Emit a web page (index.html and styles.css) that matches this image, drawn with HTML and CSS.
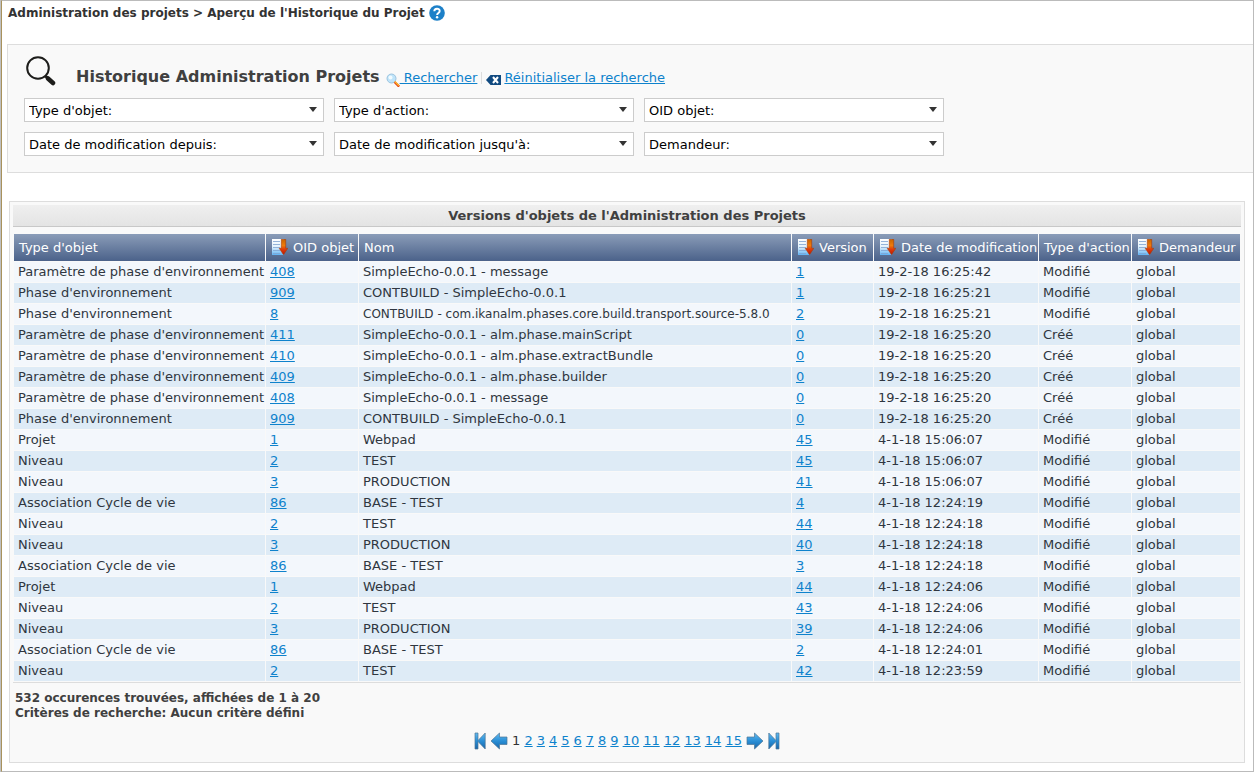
FILE: index.html
```html
<!DOCTYPE html>
<html lang="fr">
<head>
<meta charset="utf-8">
<title>Aperçu de l'Historique du Projet</title>
<link rel="stylesheet" href="styles.css">
</head>
<body>
<svg class="defs" aria-hidden="true">
  <defs>
    <linearGradient id="paper" x1="0" y1="0" x2="0" y2="1"><stop offset="0" stop-color="#fff"/><stop offset="0.5" stop-color="#e2f2fc"/><stop offset="1" stop-color="#5fb2f4"/></linearGradient>
    <linearGradient id="flame" x1="0" y1="0" x2="0" y2="1"><stop offset="0" stop-color="#c86400"/><stop offset="0.4" stop-color="#ee7c0c"/><stop offset="0.65" stop-color="#e03a08"/><stop offset="1" stop-color="#b81804"/></linearGradient>
    <linearGradient id="blue" x1="0" y1="0" x2="0" y2="1"><stop offset="0" stop-color="#62baf0"/><stop offset="0.5" stop-color="#2a8fd6"/><stop offset="1" stop-color="#1764a8"/></linearGradient>
    <symbol id="sort" viewBox="0 0 17 17">
      <path d="M1 0h12v16H1z" fill="url(#paper)"/>
      <path d="M2 2.500h7M2 5.500h7M2 8.500h7M2 11.500h7M2 14.500h7" stroke="#7fa3d0" stroke-width=".8"/>
      <path d="M10.300 .3h4.400v9h2.100L12.500 15.700 8.200 9.300h2.100z" fill="url(#flame)" stroke="#a83a08" stroke-width=".6"/>
    </symbol>
    <symbol id="arrow" viewBox="0 0 18 18">
      <path d="M1 5h7.500V1l8.500 8-8.500 8v-4.500H1z" fill="url(#blue)" stroke="#4d7595" stroke-width=".7"/>
    </symbol>
    <symbol id="end" viewBox="0 0 12 18">
      <path d="M.8 1L8 8.500V1h3v16H8v-7.500L.8 17z" fill="url(#blue)" stroke="#4d7595" stroke-width=".7"/>
    </symbol>
  </defs>
</svg>
<div class="page">
  <header class="crumbs">
    <span>Administration des projets &gt; Aperçu de l'Historique du Projet</span>
    <a href="#aide" aria-label="Aide"><svg class="help" viewBox="0 0 16 16"><circle cx="8" cy="8" r="7.800" fill="#1d80c8"/><path d="M5.300 6.200C5.300 2.900 10.700 2.900 10.700 6c0 2-2.600 2-2.600 4" fill="none" stroke="#fff" stroke-width="1.900"/><circle cx="8.100" cy="12.200" r="1.200" fill="#fff"/></svg></a>
  </header>

  <form class="search">
    <div class="search-head">
      <svg class="loupe" viewBox="0 0 30 30"><circle cx="12" cy="12" r="10.800" fill="none" stroke="#1d1d1b" stroke-width="2"/><path d="M19.500 20l2.500 2.500" stroke="#1d1d1b" stroke-width="3"/><path d="M22 22.500l5 4.500" stroke="#1d1d1b" stroke-width="4.500" stroke-linecap="round"/></svg>
      <h1>Historique Administration Projets</h1>
      <a class="action" href="#rechercher"><svg class="find" viewBox="0 0 14 14"><circle cx="5.500" cy="5.500" r="4.500" fill="#bfe4fa" stroke="#9cc3de"/><circle cx="4.500" cy="4.500" r="2" fill="#f2fbff"/><path d="M8.600 9l4.600 4.600" stroke="#e03a10" stroke-width="2.400"/><path d="M8.800 8.600l4.200 4.200" stroke="#fbb62c" stroke-width="1.400"/></svg>&nbsp;Rechercher</a>
      <span class="bar"></span>
      <a class="action" href="#reinitialiser"><svg class="reset" viewBox="0 0 15 10"><path d="M0 5L4.500 0H15v10H4.500z" fill="#114a80"/><path d="M7 2l5 6M12 2L7 8" stroke="#fff" stroke-width="2"/></svg><span>Réinitialiser la recherche</span></a>
    </div>
    <div class="filters">
      <span class="pick"><select aria-label="Type d'objet"><option>Type d'objet:</option></select></span>
      <span class="pick"><select aria-label="Type d'action"><option>Type d'action:</option></select></span>
      <span class="pick"><select aria-label="OID objet"><option>OID objet:</option></select></span>
      <span class="pick"><select aria-label="Date de modification depuis"><option>Date de modification depuis:</option></select></span>
      <span class="pick"><select aria-label="Date de modification jusqu'à"><option>Date de modification jusqu'à:</option></select></span>
      <span class="pick"><select aria-label="Demandeur"><option>Demandeur:</option></select></span>
    </div>
  </form>

  <main class="results">
    <h2>Versions d'objets de l'Administration des Projets</h2>
    <table>
      <colgroup><col class="c-type"><col class="c-oid"><col><col class="c-version"><col class="c-date"><col class="c-action"><col class="c-user"></colgroup>
      <thead>
        <tr>
          <th>Type d'objet</th>
          <th><a href="#tri-oid"><svg><use href="#sort"/></svg>OID objet</a></th>
          <th>Nom</th>
          <th><a href="#tri-version"><svg><use href="#sort"/></svg>Version</a></th>
          <th><a href="#tri-date"><svg><use href="#sort"/></svg>Date de modification</a></th>
          <th>Type d'action</th>
          <th><a href="#tri-demandeur"><svg><use href="#sort"/></svg>Demandeur</a></th>
        </tr>
      </thead>
      <tbody>
        <tr><td>Paramètre de phase d'environnement</td><td><a href="#o">408</a></td><td>SimpleEcho-0.0.1 - message</td><td><a href="#v">1</a></td><td>19-2-18 16:25:42</td><td>Modifié</td><td>global</td></tr>
        <tr><td>Phase d'environnement</td><td><a href="#o">909</a></td><td>CONTBUILD - SimpleEcho-0.0.1</td><td><a href="#v">1</a></td><td>19-2-18 16:25:21</td><td>Modifié</td><td>global</td></tr>
        <tr><td>Phase d'environnement</td><td><a href="#o">8</a></td><td class="long">CONTBUILD - com.ikanalm.phases.core.build.transport.source-5.8.0</td><td><a href="#v">2</a></td><td>19-2-18 16:25:21</td><td>Modifié</td><td>global</td></tr>
        <tr><td>Paramètre de phase d'environnement</td><td><a href="#o">411</a></td><td>SimpleEcho-0.0.1 - alm.phase.mainScript</td><td><a href="#v">0</a></td><td>19-2-18 16:25:20</td><td>Créé</td><td>global</td></tr>
        <tr><td>Paramètre de phase d'environnement</td><td><a href="#o">410</a></td><td>SimpleEcho-0.0.1 - alm.phase.extractBundle</td><td><a href="#v">0</a></td><td>19-2-18 16:25:20</td><td>Créé</td><td>global</td></tr>
        <tr><td>Paramètre de phase d'environnement</td><td><a href="#o">409</a></td><td>SimpleEcho-0.0.1 - alm.phase.builder</td><td><a href="#v">0</a></td><td>19-2-18 16:25:20</td><td>Créé</td><td>global</td></tr>
        <tr><td>Paramètre de phase d'environnement</td><td><a href="#o">408</a></td><td>SimpleEcho-0.0.1 - message</td><td><a href="#v">0</a></td><td>19-2-18 16:25:20</td><td>Créé</td><td>global</td></tr>
        <tr><td>Phase d'environnement</td><td><a href="#o">909</a></td><td>CONTBUILD - SimpleEcho-0.0.1</td><td><a href="#v">0</a></td><td>19-2-18 16:25:20</td><td>Créé</td><td>global</td></tr>
        <tr><td>Projet</td><td><a href="#o">1</a></td><td>Webpad</td><td><a href="#v">45</a></td><td>4-1-18 15:06:07</td><td>Modifié</td><td>global</td></tr>
        <tr><td>Niveau</td><td><a href="#o">2</a></td><td>TEST</td><td><a href="#v">45</a></td><td>4-1-18 15:06:07</td><td>Modifié</td><td>global</td></tr>
        <tr><td>Niveau</td><td><a href="#o">3</a></td><td>PRODUCTION</td><td><a href="#v">41</a></td><td>4-1-18 15:06:07</td><td>Modifié</td><td>global</td></tr>
        <tr><td>Association Cycle de vie</td><td><a href="#o">86</a></td><td>BASE - TEST</td><td><a href="#v">4</a></td><td>4-1-18 12:24:19</td><td>Modifié</td><td>global</td></tr>
        <tr><td>Niveau</td><td><a href="#o">2</a></td><td>TEST</td><td><a href="#v">44</a></td><td>4-1-18 12:24:18</td><td>Modifié</td><td>global</td></tr>
        <tr><td>Niveau</td><td><a href="#o">3</a></td><td>PRODUCTION</td><td><a href="#v">40</a></td><td>4-1-18 12:24:18</td><td>Modifié</td><td>global</td></tr>
        <tr><td>Association Cycle de vie</td><td><a href="#o">86</a></td><td>BASE - TEST</td><td><a href="#v">3</a></td><td>4-1-18 12:24:18</td><td>Modifié</td><td>global</td></tr>
        <tr><td>Projet</td><td><a href="#o">1</a></td><td>Webpad</td><td><a href="#v">44</a></td><td>4-1-18 12:24:06</td><td>Modifié</td><td>global</td></tr>
        <tr><td>Niveau</td><td><a href="#o">2</a></td><td>TEST</td><td><a href="#v">43</a></td><td>4-1-18 12:24:06</td><td>Modifié</td><td>global</td></tr>
        <tr><td>Niveau</td><td><a href="#o">3</a></td><td>PRODUCTION</td><td><a href="#v">39</a></td><td>4-1-18 12:24:06</td><td>Modifié</td><td>global</td></tr>
        <tr><td>Association Cycle de vie</td><td><a href="#o">86</a></td><td>BASE - TEST</td><td><a href="#v">2</a></td><td>4-1-18 12:24:01</td><td>Modifié</td><td>global</td></tr>
        <tr><td>Niveau</td><td><a href="#o">2</a></td><td>TEST</td><td><a href="#v">42</a></td><td>4-1-18 12:23:59</td><td>Modifié</td><td>global</td></tr>
      </tbody>
    </table>
    <p class="summary">532 occurences trouvées, affichées de 1 à 20<br>Critères de recherche: Aucun critère défini</p>
    <nav class="pager" aria-label="Pages">
      <a href="#premiere" aria-label="Première page"><svg class="end flip"><use href="#end"/></svg></a>
      <a href="#precedente" aria-label="Page précédente"><svg class="arrow flip"><use href="#arrow"/></svg></a>
      <span>1</span>
      <a href="#p2">2</a><a href="#p3">3</a><a href="#p4">4</a><a href="#p5">5</a><a href="#p6">6</a><a href="#p7">7</a><a href="#p8">8</a><a href="#p9">9</a><a href="#p10">10</a><a href="#p11">11</a><a href="#p12">12</a><a href="#p13">13</a><a href="#p14">14</a><a href="#p15">15</a>
      <a href="#suivante" aria-label="Page suivante"><svg class="arrow"><use href="#arrow"/></svg></a>
      <a href="#derniere" aria-label="Dernière page"><svg class="end"><use href="#end"/></svg></a>
    </nav>
  </main>
</div>
</body>
</html>
```
FILE: styles.css
```css
* { box-sizing: border-box; }
body {
  margin: 0;
  background: #fff;
  color: #333;
  font: 13px/16px Verdana, "DejaVu Sans", sans-serif;
  border-left: 1px solid #c0c0c0;
}
a { color: #0e82cc; }
svg { display: block; flex: none; }
.defs { position: absolute; width: 0; height: 0; }

.page {
  min-height: 100vh;
  border: 1px solid #bbb;
  border-left-color: #a8925c;
  padding-bottom: 8px;
}

.crumbs {
  display: flex;
  align-items: center;
  gap: 4px;
  height: 23px;
  padding-left: 6px;
  font-size: 12px;
  font-weight: bold;
  color: #333;
}
.help { width: 16px; height: 16px; }

.search {
  margin: 20px 0 28px 5px;
  padding: 8px 16px 16px;
  background: #f9f9f9;
  border: 1px solid #ddd;
  border-right: 0;
}
.search-head {
  display: flex;
  align-items: flex-end;
  height: 37px;
  margin-bottom: 8px;
}
.loupe { width: 30px; height: 30px; margin: 3px 20px 0 2px; align-self: flex-start; }
h1 { margin: 0 6px 0 0; font-size: 16px; line-height: 26px; color: #404040; }
.action { display: flex; align-items: center; line-height: 24px; }
.action span { margin-left: 3px; }
.find { width: 14px; height: 14px; margin-top: 4px; }
.reset { width: 15px; height: 10px; margin-top: 3px; }
.bar { width: 1px; height: 12px; margin: 0 4px 6px; background: #ddd; }

.filters {
  display: grid;
  grid-template-columns: repeat(3, 300px);
  gap: 10px;
}
.pick { position: relative; }
.pick::after {
  content: "";
  position: absolute;
  right: 7px;
  top: 9px;
  border: 4px solid transparent;
  border-top: 5px solid #333;
  border-bottom: 0;
  pointer-events: none;
}
select {
  display: block;
  width: 100%;
  height: 24px;
  padding: 2px 20px 0 4px;
  appearance: none;
  background: #fff;
  border: 1px solid #ccc;
  border-radius: 0;
  color: #000;
  font: inherit;
}

.results {
  margin: 0 8px 0 7px;
  padding: 3px;
  background: #f9f9f9;
  border: 1px solid #ddd;
}
h2 {
  margin: 0 0 6px;
  height: 22px;
  background: linear-gradient(#efefef, #e4e4e4);
  border-bottom: 1px solid #c8c8c8;
  color: #404040;
  font-size: 13px;
  line-height: 22px;
  text-align: center;
}

table {
  width: 100%;
  table-layout: fixed;
  border-collapse: separate;
  border-spacing: 1px;
  color: #2f3640;
  white-space: nowrap;
}
.c-type { width: 251px; }
.c-oid { width: 92px; }
.c-version { width: 81px; }
.c-date { width: 164px; }
.c-action { width: 92px; }
.c-user { width: 108px; }
th {
  height: 27px;
  padding: 0 0 0 5px;
  background: linear-gradient(#8a9cb8, #4b628a);
  color: #fff;
  font-weight: normal;
  text-align: left;
}
th a { display: flex; align-items: center; gap: 5px; color: #fff; text-decoration: none; }
th svg { width: 17px; height: 17px; }
td { height: 20px; padding: 0 0 0 4px; }
td.long { font-size: 12px; }
tbody tr { background: #f3f7fc; }
tbody tr:nth-child(even) { background: #deebf6; }

.summary {
  margin: 0;
  padding: 8px 2px 11px;
  border-top: 1px solid #ddd;
  font-size: 12px;
  font-weight: bold;
  line-height: 15px;
  color: #404040;
}
.pager {
  display: flex;
  justify-content: center;
  align-items: center;
  gap: 4px;
  height: 18px;
  margin-bottom: 9px;
}
.arrow { width: 18px; height: 18px; }
.end { width: 12px; height: 18px; }
.flip { transform: scaleX(-1); }
```
